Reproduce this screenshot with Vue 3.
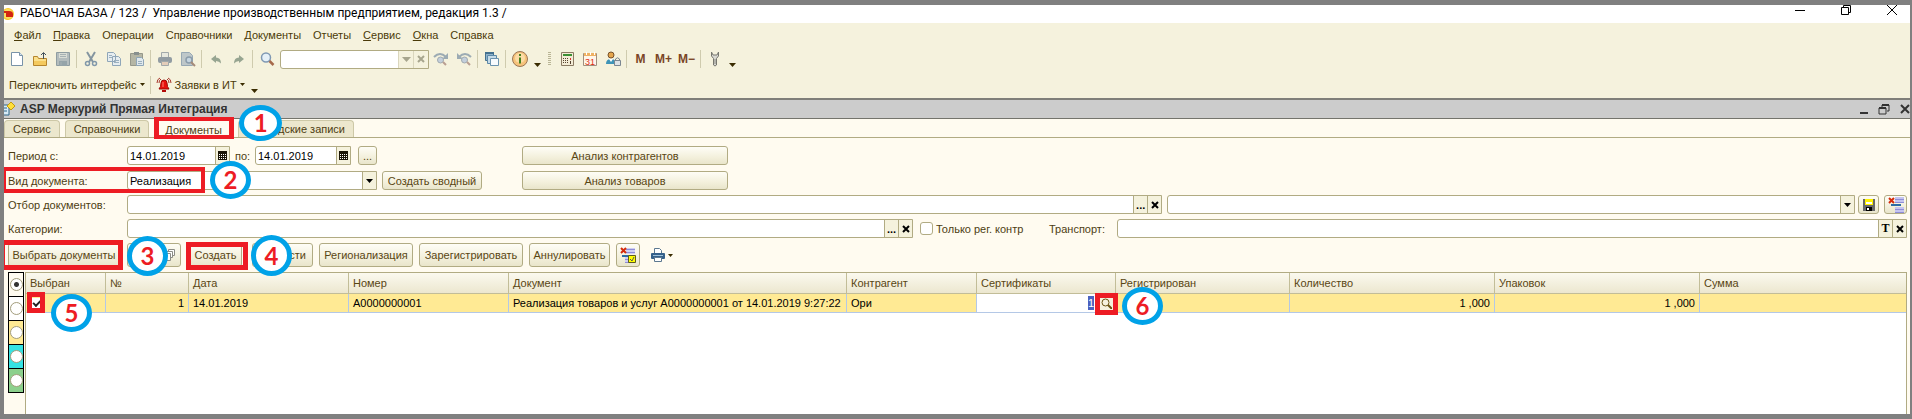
<script setup>
import { ref } from 'vue'

const menu = [
  { before: '', key: 'Ф', after: 'айл' },
  { before: '', key: 'П', after: 'равка' },
  { before: 'Операции', key: '', after: '' },
  { before: 'Справочники', key: '', after: '' },
  { before: 'Документы', key: '', after: '' },
  { before: 'Отчеты', key: '', after: '' },
  { before: '', key: 'С', after: 'ервис' },
  { before: '', key: 'О', after: 'кна' },
  { before: 'Сп', key: 'р', after: 'авка' },
]

const tabs = ['Сервис', 'Справочники', 'Документы', 'дские записи']
const activeTab = ref('Документы')

const dateFrom = ref('14.01.2019')
const dateTo = ref('14.01.2019')
const docType = ref('Реализация')
const filter = ref('')
const preset = ref('')
const category = ref('')
const onlyReg = ref(false)
const transport = ref('')
const search = ref('')

const colors = ['plain', 'white', 'yellow', 'cyan', 'green']
const rowColor = ref('plain')

const columns = [
  { title: 'Выбран', cls: 'c-check' },
  { title: '№', cls: 'c-num' },
  { title: 'Дата', cls: 'c-date' },
  { title: 'Номер', cls: 'c-date' },
  { title: 'Документ', cls: 'c-doc' },
  { title: 'Контрагент', cls: 'c-agent' },
  { title: 'Сертификаты', cls: 'c-cert' },
  { title: 'Регистрирован', cls: 'c-reg' },
  { title: 'Количество', cls: 'c-qty' },
  { title: 'Упаковок', cls: 'c-qty' },
  { title: 'Сумма', cls: 'c-sum' },
]

const rows = ref([
  {
    checked: true,
    n: 1,
    date: '14.01.2019',
    number: 'A0000000001',
    doc: 'Реализация товаров и услуг A0000000001 от 14.01.2019 9:27:22',
    agent: 'Ори',
    cert: 1,
    qty: '1 ,000',
    packs: '1 ,000',
  },
])
</script>

<template>
  <div class="window">
    <header class="titlebar">
      <svg class="logo" width="12" height="14" viewBox="0 0 12 14">
        <circle cx="4" cy="7" r="6" fill="#f9c623" />
        <circle cx="4" cy="7" r="5" fill="#fbdc5c" />
        <path d="M0 5h5q3 0 3 2H3v2h6" fill="none" stroke="#d3230f" stroke-width="2" />
      </svg>
      <span class="caption">РАБОЧАЯ БАЗА / 123 /&nbsp; Управление производственным предприятием, редакция 1.3 /</span>
      <div class="sys">
        <button aria-label="Свернуть"><svg width="12" height="12"><path d="M1 6.500h10" stroke="#000" /></svg></button>
        <button aria-label="Развернуть"><svg width="12" height="12"><path d="M1.500 3.500h7v7h-7zM3.500 3V1.500h7v7H9" fill="none" stroke="#000" /></svg></button>
        <button aria-label="Закрыть"><svg width="12" height="12"><path d="M1 1l10 10M11 1L1 11" stroke="#000" /></svg></button>
      </div>
    </header>

    <div class="panel">
      <nav class="menu">
        <a v-for="m in menu" :key="m.before + m.key + m.after" href="#">{{ m.before }}<u>{{ m.key }}</u>{{ m.after }}</a>
      </nav>

      <div class="toolbar">
        <button class="tool" aria-label="Новый"><svg width="16" height="16"><path d="M2.500 1.500h8l3 3v10h-11z" fill="#fff" stroke="#7892a8" /><path d="M10.500 1.500v3h3" fill="#d8e6ef" stroke="#7892a8" /></svg></button>
        <button class="tool" aria-label="Открыть"><svg width="16" height="16"><path d="M1.500 14.500v-9h4l1 2h8v7z" fill="#fbe08a" stroke="#b5852c" /><path d="M2 10h12v4H2z" fill="#f4c95d" /><path d="M11.500 8V2M9 4l2.500-2.500L14 4" fill="none" stroke="#44525b" /></svg></button>
        <button class="tool" aria-label="Сохранить"><svg width="16" height="16"><path d="M1.500 1.500h13v13h-13z" fill="#b3bcbd" stroke="#8f9da1" /><path d="M4 2h8v5H4z" fill="#d9ddd5" /><path d="M4 10h8v5H4z" fill="#95a4a9" /><path d="M5 3.500h6M5 5.500h6M6 11v3" stroke="#a6b1b3" /></svg></button>
        <i class="sep"></i>
        <button class="tool" aria-label="Вырезать"><svg width="16" height="16"><path d="M4 1l6 10M12 1L6 11" fill="none" stroke="#8495a0" stroke-width="2" /><circle cx="4.500" cy="12.500" r="2" fill="none" stroke="#8198aa" stroke-width="1.500" /><circle cx="11.500" cy="12.500" r="2" fill="none" stroke="#8198aa" stroke-width="1.500" /></svg></button>
        <button class="tool" aria-label="Копировать"><svg width="16" height="16"><path d="M1.500 1.500h6l2 2v7h-8zM6.500 5.500h6l2 2v7h-8z" fill="#e6edf0" stroke="#8fa6b8" /><path d="M3 4.500h3M3 6.500h3M8 9.500h5M8 11.500h5" stroke="#9bb0bf" /></svg></button>
        <button class="tool" aria-label="Вставить"><svg width="16" height="16"><path d="M1.500 2.500h12v12h-12z" fill="#b5b6a5" stroke="#96988b" /><path d="M5 1h5v3H5z" fill="#88908f" /><path d="M7.500 6.500h5l2 2v6h-7z" fill="#e1e9ed" stroke="#8fa6b8" /><path d="M9 10.500h4M9 12.500h4" stroke="#9bb0bf" /></svg></button>
        <i class="sep"></i>
        <button class="tool" aria-label="Печать"><svg width="16" height="16"><path d="M4.500 6V1.500h7V6" fill="#e8e9df" stroke="#a2a9aa" /><rect x="1" y="6" width="14" height="6" rx="2" fill="#929ca2" /><path d="M4.500 10.500h7v4h-7z" fill="#e4cdb9" stroke="#a2a9aa" /></svg></button>
        <button class="tool" aria-label="Просмотр"><svg width="16" height="16"><path d="M1.500 1.500h8l3 3v10h-11z" fill="#bec7c9" stroke="#97a8b4" /><circle cx="9" cy="9" r="3" fill="#c5d4df" stroke="#8a9cab" stroke-width="1.500" /><path d="M11 11l4 4" stroke="#a58b79" stroke-width="2" /></svg></button>
        <i class="sep"></i>
        <button class="tool" aria-label="Отменить"><svg width="16" height="16"><path d="M3 8l5-4v2.500q5 0 5 6-2-2.500-5-2.500V12z" fill="#97a591" /></svg></button>
        <button class="tool" aria-label="Вернуть"><svg width="16" height="16"><path d="M13 8L8 4v2.500q-5 0-5 6 2-2.500 5-2.500V12z" fill="#97a591" /></svg></button>
        <i class="sep"></i>
        <button class="tool" aria-label="Найти"><svg width="16" height="16"><circle cx="7" cy="6.500" r="4.500" fill="#e5f0f8" stroke="#7f98b3" stroke-width="1.500" /><path d="M10.500 10l4 4" stroke="#a6694a" stroke-width="2.500" /></svg></button>
        <div class="field search">
          <input v-model="search" type="text" aria-label="Поиск">
          <button class="fbtn" aria-label="Список"><svg width="9" height="5"><path d="M0 0h9L4.500 5z" fill="#a7a58d" /></svg></button>
          <button class="fbtn" aria-label="Очистить"><svg width="8" height="8"><path d="M1 1l6 6M7 1L1 7" stroke="#a7a58d" stroke-width="2" /></svg></button>
        </div>
        <button class="tool" aria-label="Найти далее"><svg width="16" height="16"><path d="M1 6q6-6 12 0" fill="none" stroke="#9cabb3" stroke-width="2" /><path d="M15 2v6H9z" fill="#9cabb3" /><circle cx="7.500" cy="9" r="3" fill="#c3cfdc" stroke="#a0aab0" /><path d="M10 11l3 3" stroke="#b99f92" stroke-width="2" /></svg></button>
        <button class="tool" aria-label="Найти назад"><svg width="16" height="16"><path d="M15 6Q9 0 3 6" fill="none" stroke="#9cabb3" stroke-width="2" /><path d="M1 2v6h6z" fill="#9cabb3" /><circle cx="8.500" cy="9" r="3" fill="#c3cfdc" stroke="#a0aab0" /><path d="M11 11l3 3" stroke="#b99f92" stroke-width="2" /></svg></button>
        <i class="sep"></i>
        <button class="tool" aria-label="Окна"><svg width="16" height="16"><path d="M1.500 1.500h8v8h-8z" fill="#8fb3cc" stroke="#44718f" /><path d="M1 1h9v2H1z" fill="#44718f" /><path d="M3.500 4.500h9v8h-9z" fill="#c6dbe8" stroke="#5c89a8" /><path d="M6.500 7.500h8v7h-8z" fill="#f8fbfd" stroke="#6b93ae" /></svg></button>
        <i class="sep"></i>
        <button class="tool" aria-label="Справка"><svg width="16" height="16"><circle cx="8" cy="8" r="7.500" fill="#f6c27a" stroke="#9b7654" /><circle cx="8" cy="7" r="5" fill="#fbdca6" /><path d="M8 3v2M8 6.500v6" stroke="#44801d" stroke-width="2" /></svg></button>
        <button class="more" aria-label="Ещё"><svg width="7" height="4"><path d="M0 0h7L3.500 4z" fill="#3a2c00" /></svg></button>
        <i class="grip"></i>
        <button class="tool" aria-label="Калькулятор"><svg width="16" height="16"><path d="M2.500 1.500h12v13h-12z" fill="#f3ecd5" stroke="#8b7b63" /><path d="M4 3h9v2H4z" fill="#3c8f34" /><path d="M4 7.500h6M4 9.500h6M4 11.500h6" stroke="#54402e" stroke-dasharray="1 1" /><path d="M11.500 7v2" stroke="#d33" /><path d="M11.500 10v3" stroke="#54402e" /></svg></button>
        <button class="tool" aria-label="Календарь"><svg width="16" height="16"><path d="M1.500 2.500h13v12h-13z" fill="#fff6ea" stroke="#9f8f7e" /><path d="M2 2h12v3H2z" fill="#eeb163" /><path d="M4.500 1v3M8.500 1v3M12.500 1v3" stroke="#fff" /><text x="8" y="14" text-anchor="middle" class="day">31</text></svg></button>
        <button class="tool" aria-label="Пользователи"><svg width="16" height="16"><circle cx="6" cy="4" r="3" fill="#e5a64d" stroke="#76502a" /><path d="M1 13q0-5 5-5t5 5z" fill="#3e94b7" /><path d="M4 8l2 3 2-3z" fill="#fff" /><path d="M10.500 9V8q2-2.500 4 0v1" fill="none" stroke="#7b8691" /><path d="M9.500 9.500h6v5h-6z" fill="#dde2e6" stroke="#7b8691" /></svg></button>
        <i class="sep"></i>
        <button class="tool mem">M</button>
        <button class="tool mem">M+</button>
        <button class="tool mem">M−</button>
        <i class="sep"></i>
        <button class="tool" aria-label="Настройка"><svg width="16" height="16"><path d="M4.500 1v4l2 2.500V14q1.500 2 3 0V7.500l2-2.500V1L10 4H6z" fill="#d9d9d2" stroke="#77776f" /><path d="M8 8v5" stroke="#8b8b83" /></svg></button>
        <button class="more" aria-label="Ещё"><svg width="7" height="4"><path d="M0 0h7L3.500 4z" fill="#3a2c00" /></svg></button>
      </div>

      <div class="toolbar second">
        <button class="link">Переключить интерфейс<svg width="5" height="3"><path d="M0 0h5L2.500 3z" fill="#3a2c00" /></svg></button>
        <i class="sep"></i>
        <button class="link">
          <svg width="16" height="16"><path d="M3 12q2-2 2-6 0-3 3-3t3 3q0 4 2 6z" fill="#e8100c" stroke="#9c0905" /><path d="M6 13h4v2H6z" fill="#b30a06" /><path d="M3 6Q3 3 5 2M1 6q0-4 3-5M13 6q0-3-2-4M15 6q0-4-3-5" fill="none" stroke="#a6352a" /><path d="M7 5v5" stroke="#ff8478" /></svg>Заявки в ИТ<svg width="5" height="3"><path d="M0 0h5L2.500 3z" fill="#3a2c00" /></svg>
        </button>
        <button class="more" aria-label="Ещё"><svg width="7" height="4"><path d="M0 0h7L3.500 4z" fill="#3a2c00" /></svg></button>
      </div>
    </div>

    <div class="subtitle">
      <svg width="11" height="15" viewBox="0 0 11 15"><path d="M0 3h5v10H0" fill="#d9ecf7" stroke="#2e6688" /><path d="M0 6h3M0 9h3" stroke="#2e6688" /><path d="M7 0l4 4-4 4-4-4z" fill="#ffdf3a" stroke="#c29a12" /></svg>
      <h1>ASP Меркурий Прямая Интеграция</h1>
      <div class="sys small">
        <button aria-label="Свернуть"><svg width="12" height="12"><path d="M2 10h8" stroke="#333" stroke-width="2" /></svg></button>
        <button aria-label="Развернуть"><svg width="12" height="12"><path d="M1 5h7v6H1zM4 4V2h7v6H9" fill="none" stroke="#333" /><path d="M1 5h7M4 2h7" stroke="#333" stroke-width="2" /></svg></button>
        <button aria-label="Закрыть"><svg width="12" height="12"><path d="M3 2l8 8M11 2l-8 8" stroke="#333" stroke-width="2" /></svg></button>
      </div>
    </div>

    <div class="tabs">
      <div v-for="t in tabs" :key="t" class="tab-slot">
        <button class="tab" :class="{ active: t === activeTab }" @click="activeTab = t">{{ t }}</button>
        <template v-if="t === 'Документы'">
          <i class="frame f1"></i>
          <b class="step s1">1</b>
        </template>
      </div>
    </div>

    <main class="form">
      <div class="top">
        <div class="row">
          <label class="lbl" for="from">Период с:</label>
          <div class="field date">
            <input id="from" v-model="dateFrom" type="text">
            <button class="fbtn" aria-label="Выбрать дату"><svg width="9" height="9"><path d="M0 0h9v9H0z" fill="#1b1608" /><path d="M1 3.500h7M1 5.500h7M1 7.500h7" stroke="#fff" stroke-dasharray="1 1" /></svg></button>
          </div>
          <label class="to" for="to">по:</label>
          <div class="field date">
            <input id="to" v-model="dateTo" type="text">
            <button class="fbtn" aria-label="Выбрать дату"><svg width="9" height="9"><path d="M0 0h9v9H0z" fill="#1b1608" /><path d="M1 3.500h7M1 5.500h7M1 7.500h7" stroke="#fff" stroke-dasharray="1 1" /></svg></button>
          </div>
          <button class="btn dots">...</button>
        </div>
        <button class="btn">Анализ контрагентов</button>
        <div class="row">
          <label class="lbl" for="type">Вид документа:</label>
          <div class="field type">
            <select id="type" v-model="docType">
              <option>Реализация</option>
              <option>Поступление</option>
            </select>
            <span class="fbtn"><svg width="7" height="4"><path d="M0 0h7L3.500 4z" /></svg></span>
          </div>
          <button class="btn summary">Создать сводный</button>
          <i class="frame f2"></i>
          <b class="step s2">2</b>
        </div>
        <button class="btn">Анализ товаров</button>
      </div>

      <div class="row">
        <label class="lbl" for="filter">Отбор документов:</label>
        <div class="field filter">
          <input id="filter" v-model="filter" type="text">
          <button class="fbtn">...</button>
          <button class="fbtn" aria-label="Очистить"><svg width="8" height="8"><path d="M1 1l6 6M7 1L1 7" stroke="#000" stroke-width="2" /></svg></button>
        </div>
        <div class="field preset">
          <select v-model="preset" aria-label="Сохранённый отбор"><option value=""></option></select>
          <span class="fbtn"><svg width="7" height="4"><path d="M0 0h7L3.500 4z" /></svg></span>
        </div>
        <button class="btn pic" aria-label="Сохранить отбор"><svg width="12" height="12"><path d="M0 0h12v12H0z" fill="#686868" /><path d="M2 0h8v6H2z" fill="#fff200" /><path d="M3 3h6v2H3z" fill="#fff" /><path d="M3 8h6v4H3z" fill="#000" /><path d="M4 9h2v2H4z" fill="#fff" /></svg></button>
        <button class="btn pic last" aria-label="Отключить отбор"><svg width="16" height="16"><path d="M7 0h9v6H7zM7 10h9v6H7z" fill="#c5c4f0" /><path d="M7 2.500h9M7 5.500h9M7 12.500h9M7 15.500h9" stroke="#8f8dd6" /><path d="M3 8h10" stroke="#2d6ca5" stroke-width="2" /><path d="M1 1l5 5M6 1L1 6" stroke="#d42a0a" stroke-width="2" /></svg></button>
      </div>

      <div class="row">
        <label class="lbl" for="cat">Категории:</label>
        <div class="field category">
          <input id="cat" v-model="category" type="text">
          <button class="fbtn">...</button>
          <button class="fbtn" aria-label="Очистить"><svg width="8" height="8"><path d="M1 1l6 6M7 1L1 7" stroke="#000" stroke-width="2" /></svg></button>
        </div>
        <input id="reg" v-model="onlyReg" class="check" type="checkbox">
        <label class="reg" for="reg">Только рег. контр</label>
        <label class="transport" for="transport">Транспорт:</label>
        <div class="field vehicle">
          <input id="transport" v-model="transport" type="text">
          <button class="fbtn serif">T</button>
          <button class="fbtn" aria-label="Очистить"><svg width="8" height="8"><path d="M1 1l6 6M7 1L1 7" stroke="#000" stroke-width="2" /></svg></button>
        </div>
      </div>

      <div class="row actions">
        <div class="slot pick">
          <button class="btn">Выбрать документы</button>
          <i class="frame f3"></i>
          <b class="step s3">3</b>
        </div>
        <button class="btn copies" aria-label="Флажки"><svg width="11" height="12"><path d="M4.500.500h6v6h-6z" fill="#fff" stroke="#8c8c86" /><path d="M2.500 2.500h6v6h-6z" fill="#fff" stroke="#8c8c86" /><path d="M.500 4.500h6v7h-6z" fill="#fff" stroke="#8c8c86" /></svg></button>
        <div class="slot create">
          <button class="btn">Создать</button>
          <i class="frame f4"></i>
          <b class="step s4">4</b>
        </div>
        <button class="btn short">сти</button>
        <button class="btn w94">Регионализация</button>
        <button class="btn w104">Зарегистрировать</button>
        <button class="btn w81">Аннулировать</button>
        <button class="btn tick" aria-label="Отбор по отметкам"><svg width="16" height="16"><path d="M6 1h9v6H6zM5 10h6v5H5z" fill="#d0cff2" /><path d="M6 2.500h9M6 5.500h9M5 12.500h4M5 15.500h4" stroke="#8f8dd6" /><path d="M2 9h9" stroke="#2d6ca5" stroke-width="2" /><path d="M1 1l5 5M6 1L1 6" stroke="#d42a0a" stroke-width="2" /><path d="M8.500 8.500h7v7h-7z" fill="#ff0" stroke="#5d5d1c" /><path d="M10 12l2 2 2-4" fill="none" stroke="#555" /></svg></button>
        <button class="print" aria-label="Печать"><svg width="14" height="14"><path d="M3.500 6V.500h5l2 2V6" fill="#fff" stroke="#5c7890" /><rect x="0" y="5" width="14" height="6" rx="1" fill="#35608a" /><path d="M2 7.500h10" stroke="#9ec1da" /><path d="M3.500 9.500h7v4h-7z" fill="#fff" stroke="#5c7890" /></svg><svg width="5" height="3"><path d="M0 0h5L2.500 3z" fill="#3a2c00" /></svg></button>
      </div>

      <div class="list">
        <div class="palette">
          <label v-for="c in colors" :key="c" :class="c"><input v-model="rowColor" type="radio" name="color" :value="c" :aria-label="c"></label>
        </div>
        <div class="grid">
          <table>
            <colgroup>
              <col v-for="(c, i) in columns" :key="i" :class="c.cls">
            </colgroup>
            <thead>
              <tr><th v-for="c in columns" :key="c.title">{{ c.title }}</th></tr>
            </thead>
            <tbody>
              <tr v-for="r in rows" :key="r.n">
                <td class="mark">
                  <input v-model="r.checked" type="checkbox" aria-label="Выбран">
                  <i class="frame f5"></i>
                  <b class="step s5">5</b>
                </td>
                <td class="num">{{ r.n }}</td>
                <td>{{ r.date }}</td>
                <td>{{ r.number }}</td>
                <td>{{ r.doc }}</td>
                <td>{{ r.agent }}</td>
                <td class="cert">
                  <div class="edit">
                    <span class="sel">{{ r.cert }}</span>
                    <button class="lens" aria-label="Открыть"><svg width="11" height="11"><circle cx="4.500" cy="4.500" r="3.500" fill="none" stroke="#6b5513" /><path d="M7 7l4 4" stroke="#6b5513" stroke-width="2" /></svg></button>
                  </div>
                  <i class="frame f6"></i>
                  <b class="step s6">6</b>
                </td>
                <td></td>
                <td class="num">{{ r.qty }}</td>
                <td class="num">{{ r.packs }}</td>
                <td></td>
              </tr>
            </tbody>
          </table>
        </div>
      </div>
    </main>
  </div>
</template>

<style>
body {
  margin: 0;
}
</style>

<style scoped>
* {
  box-sizing: border-box;
}
.window {
  display: flex;
  flex-direction: column;
  min-height: 100vh;
  border: solid #808080;
  border-width: 5px 2px 5px 4px;
  background: #fffbf0;
  color: #4d3d12;
  font: 11px/14px "Liberation Sans", Arial, sans-serif;
  overflow: hidden;
}
button, input, select {
  margin: 0;
  padding: 0;
  border: none;
  background: none;
  color: inherit;
  font: inherit;
  outline: none;
}
svg {
  display: block;
  flex: none;
}

/* заголовок окна */
.titlebar {
  display: flex;
  align-items: center;
  height: 18px;
  background: #fff;
  color: #000;
}
.logo {
  margin-right: 4px;
}
.caption {
  font: 12px/16px Roboto, "Noto Sans", sans-serif;
  padding-bottom: 3px;
}
.sys {
  display: flex;
  gap: 34px;
  margin-left: auto;
  padding: 0 12px 8px 0;
}
.sys.small {
  gap: 8px;
  padding: 0;
}

/* меню и панели */
.panel {
  background: #f5f2dd;
}
.menu {
  display: flex;
  align-items: center;
  gap: 12px;
  height: 24px;
  padding-left: 10px;
}
.menu a {
  color: #4a3a08;
  text-decoration: none;
}
.toolbar {
  display: flex;
  align-items: center;
  height: 24px;
  padding-left: 1px;
}
.toolbar.second {
  height: 27px;
  padding-left: 5px;
}
.tool {
  display: flex;
  align-items: center;
  justify-content: center;
  width: 23px;
  height: 22px;
}
.mem {
  color: #7a4526;
  font-weight: bold;
  font-size: 12px;
}
.day {
  font: 9px "Liberation Sans", sans-serif;
  fill: #e03014;
}
.sep {
  flex: none;
  width: 1px;
  height: 18px;
  margin: 0 2px;
  background: #cfcbae;
}
.grip {
  width: 3px;
  height: 14px;
  margin: 0 4px 0 6px;
  background: repeating-linear-gradient(#b9b595 0 1px, transparent 1px 2px);
}
.more {
  width: 11px;
  padding: 12px 0 0 3px;
}
.link {
  display: flex;
  align-items: center;
  gap: 3px;
  color: #4a3a08;
}
.second .sep {
  margin: 0 5px;
}
.second .more {
  margin-left: 3px;
}
.search {
  width: 149px;
  margin-left: 2px;
  background: #fffcf3;
  border-color: #dad6bd;
}

/* заголовок обработки */
.subtitle {
  display: flex;
  align-items: center;
  height: 21px;
  border-top: 2px solid #7f7f79;
  border-bottom: 1px solid #74746c;
  background: #ccc;
}
h1 {
  margin: 0 0 0 5px;
  color: #333;
  font: bold 12px/16px "Liberation Sans", Arial, sans-serif;
}

/* закладки */
.tabs {
  display: flex;
  align-items: flex-end;
  gap: 5px;
  height: 19px;
  border-bottom: 1px solid #b1ab83;
}
.tab-slot {
  position: relative;
}
.tab {
  display: block;
  height: 17px;
  padding: 0 8px;
  border: 1px solid #cdc8a7;
  border-bottom: none;
  border-radius: 4px 4px 0 0;
  background: #ece7cd;
}
.tab.active {
  height: 18px;
  margin-bottom: -1px;
  padding: 0 10px;
  background: #fffbf0;
}
.tab-slot:last-child .tab {
  width: 116px;
  text-align: right;
}

/* форма */
.form {
  display: flex;
  flex: 1;
  flex-direction: column;
  gap: 5px;
  padding: 8px 3px 0 4px;
}
.top {
  display: grid;
  grid-template-columns: 474px 206px;
  gap: 6px 40px;
}
.row {
  display: flex;
  align-items: center;
  position: relative;
  height: 19px;
}
.lbl {
  flex: none;
  width: 119px;
}
.field {
  display: flex;
  height: 19px;
  border: 1px solid #b1ab83;
  border-radius: 3px 0 0 3px;
  background: #fff;
  color: #000;
}
.field input, .field select {
  flex: 1;
  min-width: 0;
  padding-left: 2px;
  appearance: none;
}
.fbtn {
  display: flex;
  flex: none;
  align-items: center;
  justify-content: center;
  width: 14px;
  border-left: 1px solid #b1ab83;
  background: #f5f2dd;
  font-weight: bold;
}
.search .fbtn {
  width: 15px;
  border-color: #dad6bd;
}
.serif {
  font: bold 12px "Liberation Serif", serif;
}
.date {
  width: 103px;
}
.date + .to {
  width: 25px;
  padding-left: 5px;
}
.date:nth-of-type(2) {
  width: 96px;
}
.type {
  width: 250px;
}
.btn {
  display: flex;
  flex: none;
  align-items: center;
  justify-content: center;
  height: 19px;
  border: 1px solid #b1ab83;
  border-radius: 3px;
  background: linear-gradient(#fefdf6, #f3f0dc 60%, #e9e5cb);
  color: #594613;
}
.dots {
  width: 19px;
  margin-left: 7px;
}
.summary {
  width: 100px;
  margin-left: 5px;
}
.filter {
  flex: 1035;
}
.preset {
  flex: 687;
  margin-left: 5px;
}
.pic {
  width: 21px;
  margin-left: 3px;
}
.pic.last {
  width: 23px;
  margin-left: 5px;
}
.category {
  flex: 786;
}
.vehicle {
  flex: 790;
}
.check {
  width: 13px;
  height: 13px;
  margin: 0 3px 0 7px;
  border: 1px solid #b1ab83;
  border-radius: 3px;
  background: #fff;
  appearance: none;
}
.check:checked {
  background: #594613;
}
.reg {
  width: 113px;
}
.transport {
  width: 68px;
}

/* кнопки действий */
.actions {
  height: 24px;
}
.actions .btn {
  height: 24px;
}
.slot {
  position: relative;
}
.slot .btn {
  width: 100%;
}
.pick {
  width: 112px;
  margin-right: 7px;
}
.copies {
  width: 54px;
  padding-left: 30px;
  margin-right: 8px;
}
.create {
  width: 53px;
  margin-right: 10px;
}
.short {
  justify-content: flex-end;
  width: 61px;
  padding-right: 6px;
  margin-right: 6px;
}
.w94 {
  width: 94px;
  margin-right: 6px;
}
.w104 {
  width: 104px;
  margin-right: 6px;
}
.w81 {
  width: 81px;
  margin-right: 6px;
}
.tick {
  width: 24px;
}
.print {
  display: flex;
  align-items: center;
  gap: 3px;
  margin-left: 11px;
}

/* список */
.list {
  display: flex;
  flex: 1;
}
.palette {
  width: 16px;
  margin-right: 1px;
}
.palette label {
  display: flex;
  align-items: center;
  justify-content: center;
  height: 24px;
  border: 1px solid #000;
  border-bottom: none;
}
.palette label:last-child {
  height: 25px;
  border-bottom: 1px solid #000;
}
.palette input {
  flex: none;
  width: 13px;
  height: 13px;
  border: 1px solid #a39d7c;
  border-radius: 50%;
  background: #fff;
  appearance: none;
}
.palette input:checked {
  background: radial-gradient(circle, #333 0 2px, #fff 3px);
}
.white {
  background: #fff;
}
.yellow {
  background: #ffea94;
}
.cyan {
  background: #35e3e3;
}
.green {
  background: #8cd08c;
}
.grid {
  flex: 1;
  border: 1px solid #b1ab83;
  border-bottom: none;
  background: #fff;
}
table {
  width: 100%;
  table-layout: fixed;
  border-collapse: separate;
  border-spacing: 0;
}
.c-check {
  width: 80px;
}
.c-num {
  width: 83px;
}
.c-date {
  width: 160px;
}
.c-doc {
  width: 338px;
}
.c-agent {
  width: 130px;
}
.c-cert {
  width: 139px;
}
.c-reg {
  width: 174px;
}
.c-qty {
  width: 205px;
}
th {
  height: 21px;
  padding: 0 4px;
  border-right: 1px solid #c2bd98;
  border-bottom: 1px solid #c2bd98;
  background: linear-gradient(#fbf9ef, #ece7cf);
  color: #594613;
  font-weight: normal;
  text-align: left;
}
td {
  height: 19px;
  padding: 0 4px;
  border-right: 1px solid #b4c8e6;
  border-bottom: 1px solid #b4c8e6;
  background: #ffea94;
  color: #000;
  white-space: nowrap;
}
th:last-child, td:last-child {
  border-right: none;
}
.num {
  text-align: right;
}
.mark, .cert {
  position: relative;
}
.mark input {
  display: block;
  width: 10px;
  height: 10px;
  margin-left: 1px;
  background: #fff;
  appearance: none;
}
.mark input:checked::before {
  content: "";
  display: block;
  width: 6px;
  height: 3px;
  margin: 0 0 0 2px;
  border: solid #222;
  border-width: 0 0 2px 2px;
  transform: translateY(2px) rotate(-45deg);
}
.cert {
  padding: 0;
  background: #fff;
}
.edit {
  display: flex;
  align-items: center;
  justify-content: flex-end;
  height: 18px;
  padding-right: 2px;
}
.sel {
  margin-right: 6px;
  background: #4a62c0;
  color: #fff;
}
.lens {
  padding: 1px;
  background: #f5f2dd;
}

/* пометки шагов инструкции */
.frame {
  position: absolute;
  border: 5px solid #ed1c24;
  pointer-events: none;
}
.step {
  position: absolute;
  z-index: 2;
  display: flex;
  align-items: center;
  justify-content: center;
  width: 41px;
  height: 38px;
  border: 5px solid #00a2e8;
  border-radius: 50%;
  background: #fff;
  color: #ed1c24;
  font: bold 24px/24px Lato, "Open Sans", sans-serif;
}
.f1 {
  inset: -3px -1px -2px 0;
  border-width: 4px 5px;
}
.s1 {
  left: 85px;
  top: -15px;
  width: 43px;
  height: 36px;
}
.f2 {
  left: -6px;
  top: -4px;
  width: 203px;
  height: 26px;
  border-width: 4px;
}
.s2 {
  left: 202px;
  top: -10px;
}
.f3 {
  inset: -3px -3px -3px -8px;
}
.s3 {
  left: 119px;
  top: -7px;
  height: 40px;
}
.f4 {
  inset: -1px -6px -3px -3px;
}
.s4 {
  left: 62px;
  top: -8px;
  height: 41px;
}
.f5 {
  left: 1px;
  top: -2px;
  width: 18px;
  height: 21px;
}
.s5 {
  left: 25px;
  top: 0;
}
.f6 {
  right: -3px;
  top: -1px;
  width: 23px;
  height: 22px;
  z-index: 1;
}
.s6 {
  right: -48px;
  top: -7px;
}
</style>
